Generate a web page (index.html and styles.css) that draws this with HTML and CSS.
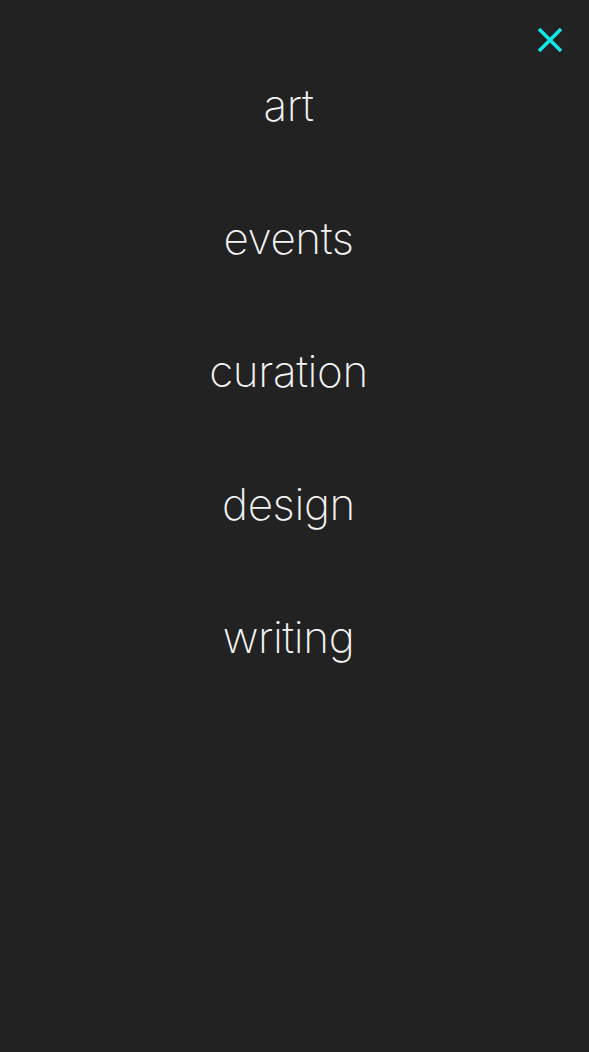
FILE: index.html
```html
<!DOCTYPE html>
<html lang="en">
<head>
<meta charset="utf-8">
<link rel="stylesheet" href="styles.css">
</head>
<body>
<div class="overlay">
  <button class="close" aria-label="Close">
    <svg width="28" height="28" viewBox="0 0 28 28"><path d="M3 3 L25 25 M25 3 L3 25" stroke="#12e6e6" stroke-width="3.6" stroke-linecap="butt" fill="none"/></svg>
  </button>
  <nav class="menu">
    <a href="#">art</a>
    <a href="#">events</a>
    <a href="#">curation</a>
    <a href="#">design</a>
    <a href="#">writing</a>
  </nav>
</div>
</body>
</html>
```
FILE: styles.css
```css
html, body { margin: 0; padding: 0; }
body { background: #222222; width: 589px; height: 1052px; overflow: hidden; font-family: Inter, "Noto Sans", sans-serif; }
.overlay { position: relative; height: 1052px; }
.close { position: absolute; top: 26px; right: 25px; background: none; border: 0; padding: 0; width: 28px; height: 28px; cursor: pointer; }
.close svg { display: block; }
.menu { display: flex; flex-direction: column; align-items: center; padding-top: 39px; padding-right: 12px; }
.menu a { color: #f4f4f4; text-decoration: none; font-size: 44px; font-weight: 200; line-height: 133px; letter-spacing: -0.4px; }
```
